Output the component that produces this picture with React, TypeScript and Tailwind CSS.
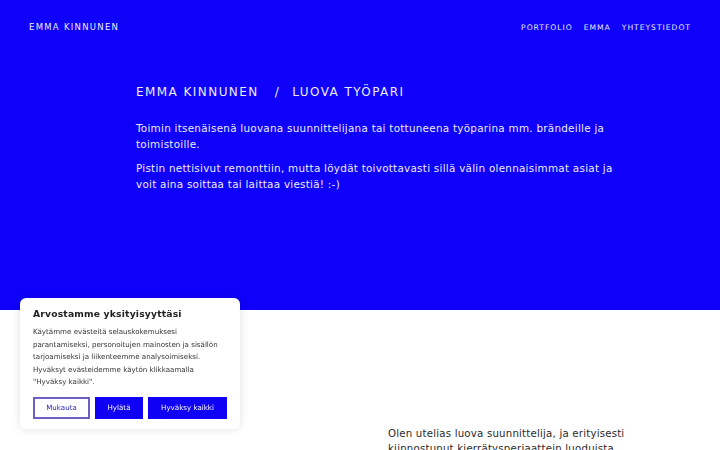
import React from 'react';

const navItems = ['Portfolio', 'Emma', 'Yhteystiedot'];

const CookieBanner: React.FC = () => (
  <div className="fixed left-[20px] bottom-[21px] w-[220px] rounded-md bg-white px-[13px] pt-[9px] pb-[10px] shadow-[0_0_10px_rgba(0,0,0,0.12)] font-['DejaVu_Sans',sans-serif]">
    <h2 className="text-[9.2px] font-bold text-[#222] leading-[14px] mb-[5px] tracking-[0.02em]">Arvostamme yksityisyyttäsi</h2>
    <p className="text-[7.1px] leading-[12.6px] text-[#333]">
      Käytämme evästeitä selauskokemuksesi parantamiseksi, personoitujen mainosten ja sisällön tarjoamiseksi ja liikenteemme analysoimiseksi. Hyväksyt evästeidemme käytön klikkaamalla "Hyväksy kaikki".
    </p>
    <div className="mt-[8px] flex gap-[5px]">
      <button className="h-[22px] w-[57px] border-2 border-[#6a60c4] text-[7.1px] text-[#2d25c0]">Mukauta</button>
      <button className="h-[22px] w-[48px] bg-[#0f00f5] text-[7.1px] text-white">Hylätä</button>
      <button className="h-[22px] w-[79px] bg-[#0f00f5] text-[7.1px] text-white">Hyväksy kaikki</button>
    </div>
  </div>
);

export default function App() {
  return (
    <div className="min-h-[450px] overflow-hidden bg-white font-['DejaVu_Sans',sans-serif]">
      <section className="h-[310px] bg-[#0f00fa] text-[#ececff]">
        <header className="flex items-center justify-between pl-[29px] pr-[29px] pt-[21px]">
          <span className="text-[8.5px] tracking-[0.15em] uppercase">Emma Kinnunen</span>
          <nav className="flex gap-[11px]">
            {navItems.map((n) => (
              <span key={n} className="text-[7.6px] uppercase tracking-[0.13em]">{n}</span>
            ))}
          </nav>
        </header>
        <div className="ml-[136px] mt-[49px] w-[482px]">
          <h1 className="flex text-[12px] uppercase leading-[18px] tracking-[0.12em]">
            <span>Emma Kinnunen</span>
            <span className="ml-[16px]">/</span>
            <span className="ml-[12px]">Luova työpari</span>
          </h1>
          <p className="mt-[19px] text-[10.4px] leading-[16px] tracking-[0.025em]">
            Toimin itsenäisenä luovana suunnittelijana tai tottuneena työparina mm. brändeille ja toimistoille.
          </p>
          <p className="mt-[8px] text-[10.4px] leading-[16px] tracking-[0.025em]">
            Pistin nettisivut remonttiin, mutta löydät toivottavasti sillä välin olennaisimmat asiat ja voit aina soittaa tai laittaa viestiä! :-)
          </p>
        </div>
      </section>
      <section className="grid grid-cols-2 pt-[116px]">
        <div />
        <div className="pl-[28px] pr-[60px]">
          <p className="text-[10.2px] leading-[15px] text-[#2a2a2a] tracking-[0.02em]">
            Olen utelias luova suunnittelija, ja erityisesti kiinnostunut kierrätysperiaattein luoduista tuotteista ja palveluista.
          </p>
        </div>
      </section>
      <CookieBanner />
    </div>
  );
}
